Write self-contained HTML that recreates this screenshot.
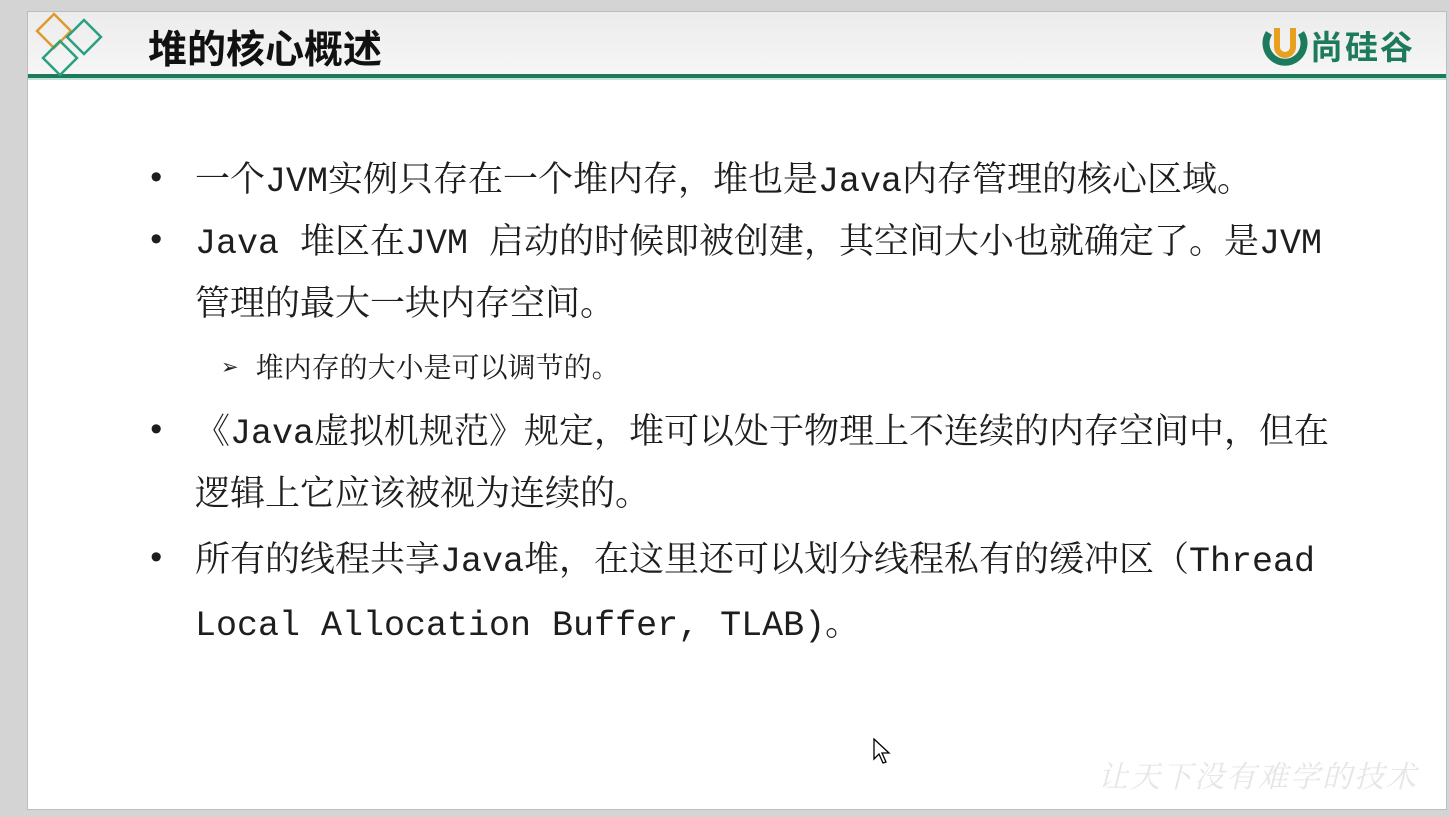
<!DOCTYPE html>
<html><head><meta charset="utf-8"><style>
html,body{margin:0;padding:0;}
body{width:1450px;height:817px;background:#d4d4d4;position:relative;overflow:hidden;font-family:"Liberation Mono","Noto Serif CJK SC",monospace;color:#1e1e1e;}
.slide{position:absolute;left:27px;top:11px;width:1420px;height:799px;background:#fff;border:1px solid #bdbdbd;box-sizing:border-box;}
.head{position:absolute;left:0;top:0;width:100%;height:63px;background:linear-gradient(#ececec,#f6f6f6);}
.bar{position:absolute;left:0;top:62px;width:100%;height:4px;background:#1d7a5c;}
.bar2{position:absolute;left:0;top:66px;width:100%;height:2px;background:#bfe3d4;}
.title{position:absolute;left:120px;top:7px;font:bold 39px "Noto Sans CJK SC",sans-serif;color:#111;}
.l{position:absolute;white-space:nowrap;font-size:35px;line-height:40px;}
.b{position:absolute;font-size:34px;left:146px;line-height:40px;}
.s{position:absolute;white-space:nowrap;font-size:28px;line-height:34px;}
.wm{position:absolute;left:1098px;top:752px;font:30px "Noto Serif CJK SC",serif;color:#e6e6e6;letter-spacing:2px;font-style:italic;white-space:nowrap;}
.logo{position:absolute;font:bold 33px "Noto Sans CJK SC",sans-serif;color:#1d7a5c;letter-spacing:2px;}
</style></head><body>
<svg style="position:absolute;left:30px;top:8px" width="80" height="72" viewBox="0 0 80 72">
<rect x="12" y="11" width="24" height="24" transform="rotate(45 24 23)" fill="none" stroke="#e09a2a" stroke-width="2.5"/>
<rect x="42" y="17" width="24" height="24" transform="rotate(45 54 29)" fill="none" stroke="#2aa080" stroke-width="2.5"/>
<rect x="18" y="38" width="24" height="24" transform="rotate(45 30 50)" fill="none" stroke="#2aa080" stroke-width="2.5"/>
</svg>
<div class="slide" style="background:transparent;border-color:transparent"></div>
<div class="slide" style="z-index:-1">
<div class="head"></div><div class="bar"></div><div class="bar2"></div>
<div class="title">堆的核心概述</div>
<svg style="position:absolute;left:1234px;top:12px" width="46" height="48" viewBox="0 0 46 48">
<path d="M7 9 A19 19 0 1 0 39 9" fill="none" stroke="#1d7a5c" stroke-width="7"/>
<path d="M15 4 V23 A8 8 0 0 0 31 23 V4" fill="none" stroke="#e8a020" stroke-width="6"/>
</svg>
<div class="logo" style="left:1282px;top:9px">尚硅谷</div>
</div>
<div class="b" style="top:160px">•</div>
<div class="l" style="left:195px;top:162px">一个JVM实例只存在一个堆内存，堆也是Java内存管理的核心区域。</div>
<div class="b" style="top:222px">•</div>
<div class="l" style="left:195px;top:224px">Java 堆区在JVM 启动的时候即被创建，其空间大小也就确定了。是JVM</div>
<div class="l" style="left:195px;top:286px">管理的最大一块内存空间。</div>
<div class="s" style="left:222px;top:354px">➢ 堆内存的大小是可以调节的。</div>
<div class="b" style="top:412px">•</div>
<div class="l" style="left:195px;top:414px">《Java虚拟机规范》规定，堆可以处于物理上不连续的内存空间中，但在</div>
<div class="l" style="left:195px;top:476px">逻辑上它应该被视为连续的。</div>
<div class="b" style="top:540px">•</div>
<div class="l" style="left:195px;top:542px">所有的线程共享Java堆，在这里还可以划分线程私有的缓冲区（Thread</div>
<div class="l" style="left:195px;top:606px">Local Allocation Buffer, TLAB)。</div>
<svg style="position:absolute;left:873px;top:738px" width="20" height="28" viewBox="0 0 20 28"><path d="M1 1 V21 L6 16 L10 25 L13 24 L9 15 L16 15 Z" fill="#fff" stroke="#000" stroke-width="1.3"/></svg>
<div class="wm">让天下没有难学的技术</div>
</body></html>
